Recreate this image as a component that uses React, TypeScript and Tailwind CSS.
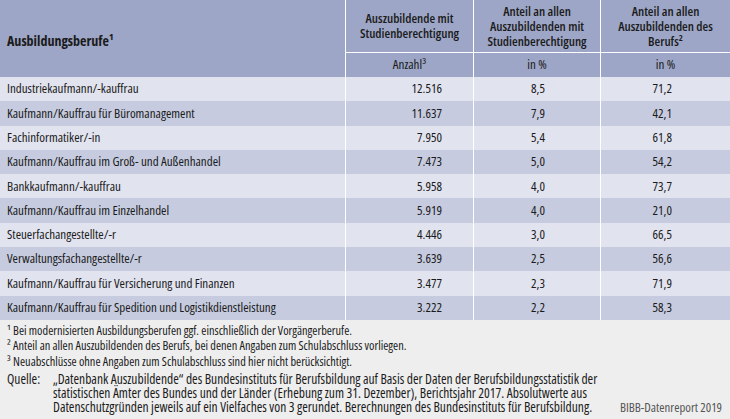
const rows: [string, string, string, string][] = [
  ["Industriekaufmann/-kauffrau", "12.516", "8,5", "71,2"],
  ["Kaufmann/Kauffrau für Büromanagement", "11.637", "7,9", "42,1"],
  ["Fachinformatiker/-in", "7.950", "5,4", "61,8"],
  ["Kaufmann/Kauffrau im Groß- und Außenhandel", "7.473", "5,0", "54,2"],
  ["Bankkaufmann/-kauffrau", "5.958", "4,0", "73,7"],
  ["Kaufmann/Kauffrau im Einzelhandel", "5.919", "4,0", "21,0"],
  ["Steuerfachangestellte/-r", "4.446", "3,0", "66,5"],
  ["Verwaltungsfachangestellte/-r", "3.639", "2,5", "56,6"],
  ["Kaufmann/Kauffrau für Versicherung und Finanzen", "3.477", "2,3", "71,9"],
  ["Kaufmann/Kauffrau für Spedition und Logistikdienstleistung", "3.222", "2,2", "58,3"],
]

export default function App() {
  return (
    <div className="w-[730px] h-[419px] bg-[#eeeeee] text-[#1b1b1b] font-['Open_Sans',sans-serif] font-stretch-condensed">
      {/* table */}
      <div className="grid grid-cols-[345px_127px_126px_1fr] gap-x-px bg-white">
        <div className="row-span-2 bg-[#9da6c6] flex items-center pl-[7px] pt-[3px] text-[14px] font-bold">
          Ausbildungsberufe¹
        </div>
        <div className="bg-[#9da6c6] h-[52px] flex items-center justify-center text-center text-[13px] leading-[15px] font-semibold">
          Auszubildende mit
          <br />
          Studienberechtigung
        </div>
        <div className="bg-[#9da6c6] h-[52px] flex items-center justify-center text-center text-[13px] leading-[15px] font-semibold">
          Anteil an allen
          <br />
          Auszubildenden mit
          <br />
          Studienberechtigung
        </div>
        <div className="bg-[#9da6c6] h-[52px] flex items-center justify-center text-center text-[13px] leading-[15px] font-semibold">
          Anteil an allen
          <br />
          Auszubildenden des
          <br />
          Berufs²
        </div>
        <div className="col-span-3 grid grid-cols-[127px_126px_1fr] gap-x-px border-t border-white">
          <div className="bg-[#9da6c6] h-[24px] flex items-center justify-center text-[13px]">Anzahl³</div>
          <div className="bg-[#9da6c6] h-[24px] flex items-center justify-center text-[13px]">in %</div>
          <div className="bg-[#9da6c6] h-[24px] flex items-center justify-center text-[13px]">in %</div>
        </div>
        {rows.map((r, i) => {
          const bg = i % 2 === 0 ? "bg-[#e1e3ef]" : "bg-[#c6cbdf]"
          return [
            <div key={`a${i}`} className={`${bg} h-[24.3px] flex items-center pl-[7px] text-[13px]`}>
              {r[0]}
            </div>,
            <div key={`b${i}`} className={`${bg} h-[24.3px] flex items-center justify-end pr-[31px] text-[13px]`}>
              {r[1]}
            </div>,
            <div key={`c${i}`} className={`${bg} h-[24.3px] flex items-center justify-end pr-[55px] text-[13px]`}>
              {r[2]}
            </div>,
            <div key={`d${i}`} className={`${bg} h-[24.3px] flex items-center justify-end pr-[58px] text-[13px]`}>
              {r[3]}
            </div>,
          ]
        })}
      </div>

      {/* notes */}
      <div className="pl-[7px] pt-[3px] text-[12.3px] leading-[15.5px]">
        <p>¹ Bei modernisierten Ausbildungsberufen ggf. einschließlich der Vorgängerberufe.</p>
        <p>² Anteil an allen Auszubildenden des Berufs, bei denen Angaben zum Schulabschluss vorliegen.</p>
        <p>³ Neuabschlüsse ohne Angaben zum Schulabschluss sind hier nicht berücksichtigt.</p>
        <div className="flex items-end mt-[3px] text-[13.5px] leading-[14px]">
          <span className="w-[46px] shrink-0 self-start">Quelle:</span>
          <p className="whitespace-nowrap">
            „Datenbank Auszubildende“ des Bundesinstituts für Berufsbildung auf Basis der Daten der Berufsbildungsstatistik der
            <br />
            statistischen Ämter des Bundes und der Länder (Erhebung zum 31. Dezember), Berichtsjahr 2017. Absolutwerte aus
            <br />
            Datenschutzgründen jeweils auf ein Vielfaches von 3 gerundet. Berechnungen des Bundesinstituts für Berufsbildung.
          </p>
          <span className="ml-auto pr-[8px] text-[12.75px] text-[#555]">BIBB-Datenreport 2019</span>
        </div>
      </div>
    </div>
  )
}
